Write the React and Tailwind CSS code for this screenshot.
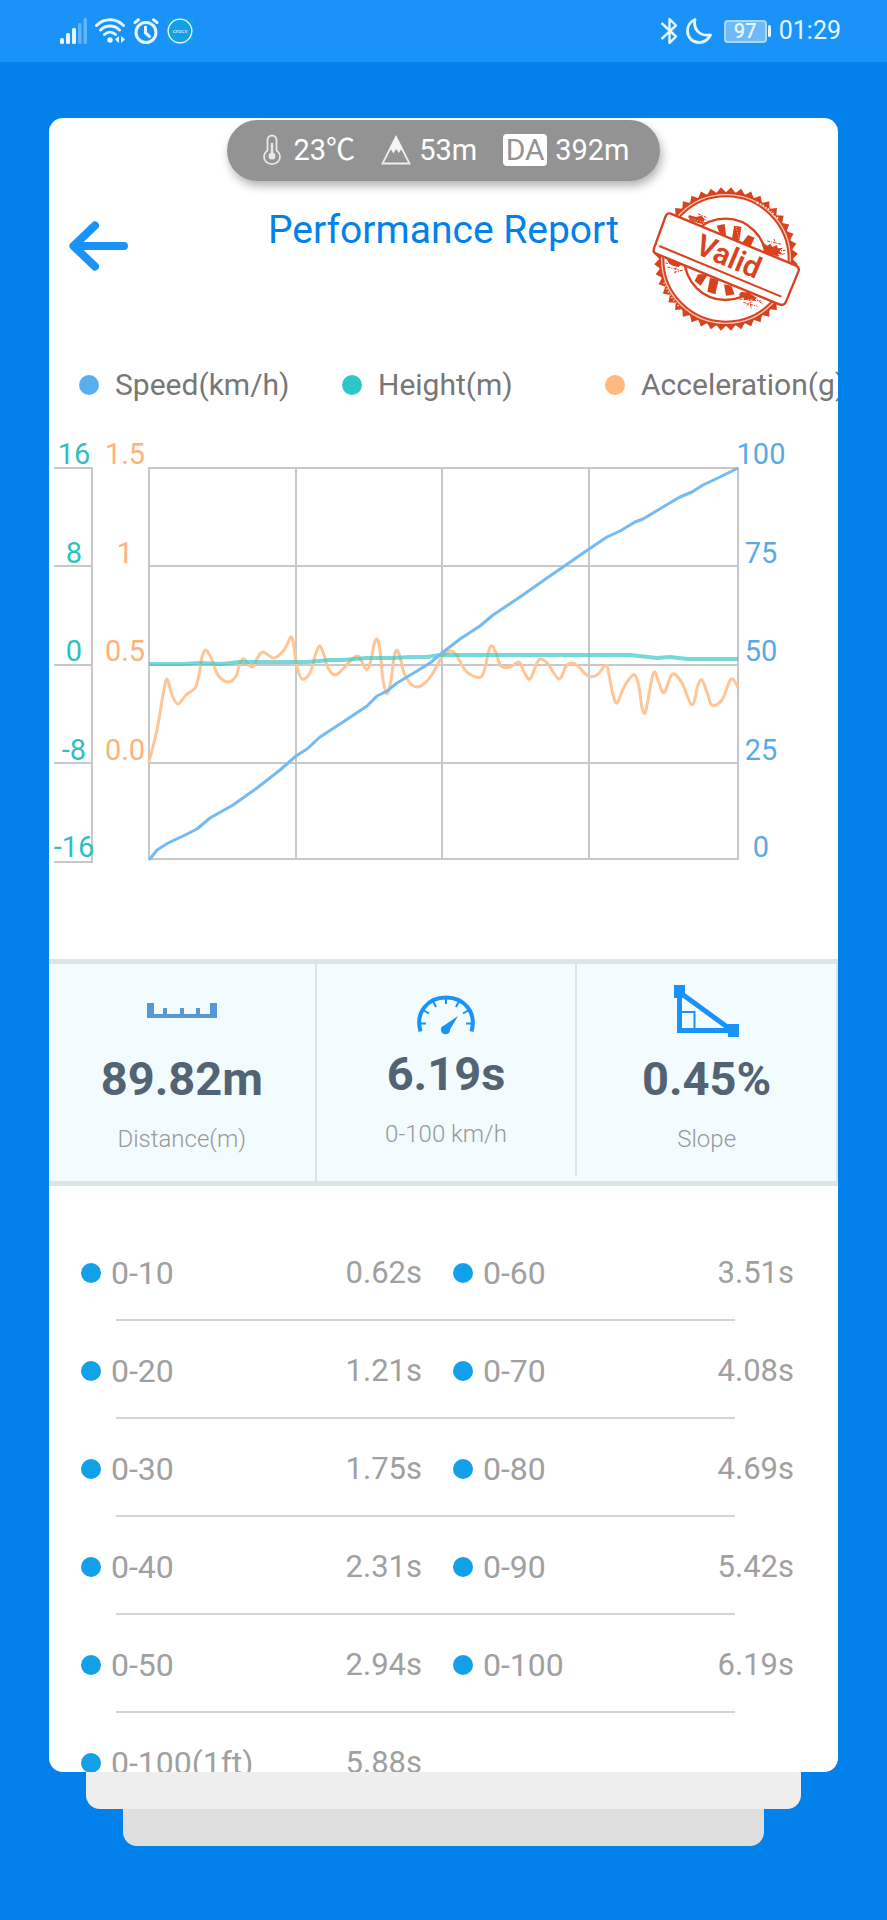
const legend = [
  { label: "Speed(km/h)", dot: "bg-[#5aaef0]" },
  { label: "Height(m)", dot: "bg-[#2ec7c9]" },
  { label: "Acceleration(g)", dot: "bg-[#ffb980]" },
];

const splits = [
  ["0-10", "0.62s", "0-60", "3.51s"],
  ["0-20", "1.21s", "0-70", "4.08s"],
  ["0-30", "1.75s", "0-80", "4.69s"],
  ["0-40", "2.31s", "0-90", "5.42s"],
  ["0-50", "2.94s", "0-100", "6.19s"],
  ["0-100(1ft)", "5.88s"],
];

// Chart points, in chart units
const acceleration = [
  [100, 322], [108, 290], [114, 255], [118, 239], [123, 255], [129, 264],
  [137, 255], [146, 248], [150, 235], [153, 217], [157, 210], [163, 220],
  [169, 235], [179, 242], [187, 236], [191, 223], [195, 219], [203, 227],
  [209, 217], [214, 212], [225, 218], [235, 210], [242, 197], [245, 207],
  [248, 227], [253, 239], [261, 233], [267, 213], [271, 206], [275, 215],
  [279, 228], [286, 235], [294, 229], [303, 219], [309, 216], [313, 222],
  [318, 230], [322, 220], [325, 205], [328, 199], [331, 210], [334, 240],
  [338, 254], [342, 240], [345, 217], [348, 210], [351, 217], [355, 233],
  [361, 243], [368, 247], [376, 243], [384, 233], [393, 217], [402, 211],
  [408, 216], [416, 230], [424, 236], [432, 237], [436, 228], [440, 210],
  [443, 206], [447, 213], [452, 226], [461, 227], [470, 222], [475, 232],
  [481, 239], [488, 223], [492, 219], [499, 224], [510, 239], [517, 226],
  [522, 223], [529, 226], [539, 236], [548, 235], [557, 225], [560, 235],
  [564, 255], [568, 263], [574, 249], [581, 238], [586, 235], [590, 247],
  [593, 268], [596, 273], [599, 260], [603, 238], [606, 232], [610, 243],
  [615, 253], [621, 238], [625, 234], [633, 243], [643, 265], [649, 245],
  [653, 240], [658, 252], [663, 265], [673, 260], [682, 239], [689, 247],
];

const speed = [
  [100, 420], [108, 410], [119, 403], [134, 396], [148, 389], [161, 378],
  [184, 365], [208, 348], [231, 330], [247, 316], [258, 309], [271, 297],
  [294, 282], [318, 266], [328, 256], [338, 251], [348, 243], [368, 231],
  [381, 223], [393, 213], [411, 199], [431, 186], [444, 175], [471, 157],
  [498, 138], [514, 127], [540, 109], [558, 97], [571, 91], [586, 82],
  [594, 79], [614, 67], [631, 57], [643, 52], [654, 45], [671, 37], [689, 28],
];

const height = [
  [100, 224], [134, 224], [151, 223], [171, 224], [191, 222], [258, 222],
  [281, 220], [294, 220], [318, 218], [344, 218], [361, 217], [378, 217],
  [391, 215], [581, 215], [608, 218], [621, 217], [638, 219], [689, 219],
];

// Catmull-Rom spline through the points
const smooth = (points) => {
  let d = `M${points[0][0]} ${points[0][1]}`;
  for (let i = 0; i < points.length - 1; i++) {
    const p0 = points[i - 1] || points[i];
    const p1 = points[i];
    const p2 = points[i + 1];
    const p3 = points[i + 2] || p2;
    d += `C${p1[0] + (p2[0] - p0[0]) / 6} ${p1[1] + (p2[1] - p0[1]) / 6} ${
      p2[0] - (p3[0] - p1[0]) / 6
    } ${p2[1] - (p3[1] - p1[1]) / 6} ${p2[0]} ${p2[1]}`;
  }
  return d;
};

const StatusBar = () => (
  <div className="flex h-[62px] shrink-0 items-center justify-between bg-[#1993f8] pl-[60px] pr-[46px] text-[#e6f5ff]">
    <div className="flex items-center gap-2">
      <svg width="27" height="26" viewBox="0 0 27 26" fill="currentColor">
        <rect x="0" y="20" width="4" height="6" rx="1.5" />
        <rect x="6" y="15" width="4" height="11" rx="1.5" />
        <rect x="12" y="10" width="4" height="16" rx="1.5" />
        <rect x="18" y="5" width="3.5" height="21" rx="1.5" opacity=".35" />
        <rect x="23.5" y="0" width="3.5" height="26" rx="1.5" opacity=".35" />
      </svg>
      <svg width="30" height="26" viewBox="0 0 30 26" fill="none" stroke="currentColor" strokeWidth="3" strokeLinecap="round">
        <path d="M1.5 7.5C9 -.3 21 -.3 28.5 7.5" />
        <path d="M5.5 12C11 6.8 19 6.8 24.5 12" />
        <path d="M9.5 16.5C12.8 13.5 17.2 13.5 20.5 16.5" />
        <circle cx="15" cy="22" r="2.7" fill="currentColor" stroke="none" />
        <path d="M24 18v7l-4-3.500zM26 18v7l4-3.500z" fill="currentColor" stroke="none" />
      </svg>
      <svg width="26" height="26" viewBox="0 0 26 26" fill="none" stroke="currentColor" strokeWidth="3" strokeLinecap="round">
        <circle cx="13" cy="14.500" r="10" />
        <path d="M2 4.500L5.500 1.800M24 4.500L20.500 1.800" />
        <path d="M12.500 9v6l4 3.500" />
      </svg>
      <svg width="26" height="26" viewBox="0 0 26 26" className="bg-[#14a0e8]">
        <circle cx="13" cy="13" r="11.800" fill="none" stroke="#fff" strokeWidth="1.300" />
        <text x="13" y="15" textAnchor="middle" fontSize="6" fill="#e6f5ff">
          crocv
        </text>
      </svg>
    </div>
    <div className="flex items-center gap-2">
      <svg width="18" height="28" viewBox="0 0 18 28" fill="none" stroke="currentColor" strokeWidth="2.400" strokeLinejoin="round">
        <path d="M1.500 6L16 19.500L9.500 26V2L16 8.500L1.500 22" />
      </svg>
      <svg width="26" height="26" viewBox="0 0 26 26" fill="none" stroke="currentColor" strokeWidth="2.800" strokeLinejoin="round">
        <path d="M9 1.500C7 11 13 18.500 24.500 17C22 22 17.500 24.500 13 24.500C6.500 24.500 1.500 19.500 1.500 13C1.500 8 4.500 3.500 9 1.500Z" />
      </svg>
      <div className="ml-1 flex items-center gap-px">
        <div className="flex h-[23px] w-[43px] items-center justify-center rounded border-2 border-[#a8d8ff] bg-[#6ebaf9] text-[20px] font-medium leading-5">
          97
        </div>
        <div className="h-3 w-[3px] rounded-sm bg-current" />
      </div>
      <span className="text-[25px] leading-8">01:29</span>
    </div>
  </div>
);

const ConditionsPill = () => (
  <div className="mx-auto mt-[2px] flex h-[61px] shrink-0 items-center gap-[26px] rounded-full bg-[#939393] px-[31px] pb-[2px] text-[29px] leading-8 text-white shadow-[2px_5px_10px_rgba(0,0,0,0.3)]">
    <div className="flex items-center gap-2">
      <svg width="28" height="32" viewBox="0 0 28 32" fill="none" stroke="#e8e8e8" strokeWidth="1.800">
        <path d="M9.500 6a4.500 4.500 0 0 1 9 0v10.500a8 7.500 0 1 1-9 0z" />
        <path d="M14 9v12" strokeWidth="2.500" />
        <circle cx="14" cy="22" r="3.500" fill="#e8e8e8" stroke="none" />
      </svg>
      <span>23℃</span>
    </div>
    <div className="flex items-center gap-2">
      <svg width="30" height="30" viewBox="0 0 30 30">
        <path d="M15 2L28.500 28.500H1.500Z" fill="none" stroke="#eee" strokeWidth="1.800" />
        <path d="M15 1L22.500 16L20 14.500L18 18L15 14L12.500 18.500L10 14.500L7.500 16Z" fill="#f4f4f4" />
      </svg>
      <span>53m</span>
    </div>
    <div className="flex items-center gap-2">
      <span className="w-11 rounded bg-white text-center text-[30px] text-[#939393]">
        DA
      </span>
      <span>392m</span>
    </div>
  </div>
);

const spokes = [
  "M232 150L256 145L260 178L246 186Z",
  "M284 150L306 153L300 196L278 190Z",
  "M326 178L346 186L334 212L306 204Z",
  "M176 296L206 296L184 330L166 316Z",
  "M212 306L238 312L228 356L204 348Z",
  "M254 326L276 330L286 356L260 360Z",
];

const ValidStamp = () => {
  const teeth = [];
  for (let i = 0; i < 44; i++) {
    const point = (r, k) => {
      const a = ((i + k) / 44) * Math.PI * 2;
      return `${(260 + r * Math.cos(a)).toFixed(1)},${(250 + r * Math.sin(a)).toFixed(1)}`;
    };
    teeth.push(point(200, 0), point(216, 0.5), point(200, 1));
  }
  return (
    <svg width="148" height="144" viewBox="38 34 444 432">
      <polygon points={teeth.join(" ")} fill="#d8431f" />
      <circle cx="260" cy="250" r="197" fill="#f6c9bd" />
      <circle cx="260" cy="250" r="198" fill="none" stroke="#d8431f" strokeWidth="6" />
      <circle cx="260" cy="250" r="188" fill="#fff" stroke="#d8431f" strokeWidth="6" />
      <path d="M352 80Q390 98 420 134" fill="none" stroke="#fff" strokeWidth="6" strokeDasharray="5 7 3 4" />
      <path d="M360 84L418 126" stroke="#d8431f" strokeWidth="3" strokeDasharray="2 6 5 4" />
      <path d="M74 320Q90 362 122 396" fill="none" stroke="#f6c9bd" strokeWidth="5" strokeDasharray="4 6" />
      <circle cx="258" cy="251" r="122" fill="none" stroke="#d8431f" strokeWidth="7" />
      <g fill="#d8431f">
        {spokes.map((d) => (
          <path key={d} d={d} />
        ))}
        <path d="M368 198L384 210L392 204L400 214L412 208L416 218L432 216L420 226L430 236L416 234L418 244L404 238L396 246L378 240Z" />
        <path d="M306 348L330 352L352 366L346 374L328 370L316 374L310 364L298 358Z" />
        <path d="M148 118L170 124L186 120L196 130L190 146L172 140L150 134Z" />
        <path d="M82 250L104 256L126 264L118 274L100 270L88 262Z" />
      </g>
      <path d="M288 146L300 192M150 128L196 140" stroke="#fff" strokeWidth="2" strokeDasharray="3 5" />
      <g stroke="#d8431f" strokeWidth="3" fill="none">
        <path d="M146 124L204 134M154 138L208 142M176 114L202 126" strokeDasharray="9 3 4 3" />
        <path d="M384 196L428 206M396 244L436 234M404 190L410 206M414 226L440 224" strokeDasharray="8 3 3 3" />
        <path d="M78 262L150 274M84 274L132 286M104 290L136 282M140 262L186 284M112 256L108 294" strokeDasharray="8 4 4 3" />
        <path d="M300 370L366 376M312 380L354 392M330 366L336 400M344 364L370 386M322 390L340 374" strokeDasharray="10 3 4 3" />
      </g>
      <path
        d="M94 114L470 270Q482 276 477 288L440 378Q434 392 420 386L50 234Q40 230 44 218L78 124Q83 110 94 114Z"
        fill="#fff"
        stroke="#d8431f"
        strokeWidth="7"
      />
      <path d="M60 211L426 363" stroke="#d8431f" strokeWidth="6" />
      <text
        transform="translate(256 271) rotate(23)"
        textAnchor="middle"
        fontSize="90"
        className="fill-[#d8431f] font-semibold"
      >
        Valid
      </text>
    </svg>
  );
};

const gridX = [100, 247, 393, 540, 689];
const gridY = [28, 126, 225, 323, 419];
const labelY = [24, 123, 221, 320, 417];

const Chart = () => (
  <svg viewBox="0 -16 789 456" className="w-full shrink-0" fontSize="29">
    <g stroke="#c8c8c8" strokeWidth="2" fill="none">
      {gridX.map((x) => (
        <path key={x} d={`M${x} 27V420`} />
      ))}
      {gridY.map((y) => (
        <path key={y} d={`M99 ${y}H690`} />
      ))}
      <path d="M5 28H43V422H5M5 126H43M5 225H43M5 323H43" />
    </g>
    <g fill="none" strokeLinejoin="round">
      <path d={smooth(acceleration)} stroke="#ffc596" strokeWidth="3" />
      <path d={`M${height.join("L")}`} stroke="#3cc8c8" strokeOpacity=".7" strokeWidth="4" />
      <path d={`M${speed.join("L")}`} stroke="#74bbf1" strokeWidth="3" />
    </g>
    <g textAnchor="middle" fill="#2fbfbf">
      {["16", "8", "0", "-8", "-16"].map((t, i) => (
        <text key={t} x="25" y={labelY[i]}>
          {t}
        </text>
      ))}
    </g>
    <g textAnchor="middle" fill="#fdb27a">
      {["1.5", "1", "0.5", "0.0"].map((t, i) => (
        <text key={t} x="76" y={labelY[i]}>
          {t}
        </text>
      ))}
    </g>
    <g textAnchor="middle" fill="#5aaae6">
      {["100", "75", "50", "25", "0"].map((t, i) => (
        <text key={t} x="712" y={labelY[i]}>
          {t}
        </text>
      ))}
    </g>
  </svg>
);

const RulerIcon = () => (
  <svg width="70" height="16" viewBox="0 0 70 16" fill="#5598d4">
    <path d="M0 0H7V11H16V5H20V11H33V5H37V11H49V5H53V11H63V0H70V15H0Z" />
  </svg>
);

const GaugeIcon = () => (
  <svg width="58" height="60" viewBox="0 0 58 60" fill="none" stroke="#1993f8">
    <path d="M3.500 55.500C-2 36 11 21.500 29 21.500C47 21.500 60 36 54.500 55.500" strokeWidth="4" />
    <path d="M2 47.500H9M56 47.500H49M6 34L12 37.500M52 34L46 37.500M16 25L19 31M42 25L39 31M29 21V28" strokeWidth="2" />
    <path d="M41 40L33 53.500A4.500 4.500 0 1 1 27 49.500Z" fill="#1993f8" stroke="none" />
  </svg>
);

const SlopeIcon = () => (
  <svg width="66" height="52" viewBox="0 0 66 52" fill="none" stroke="#1993f8">
    <path d="M5.500 8V45.500H58L8 9" strokeWidth="5" />
    <path d="M8 27H20.500V45" strokeWidth="2" />
    <path d="M0 0H11V13H0ZM54 39H65V52H54Z" fill="#1993f8" stroke="none" />
  </svg>
);

const Stat = ({ icon, value, label, className }) => (
  <div
    className={`flex flex-col items-center justify-end border-r-2 border-[#dae5e8] ${className}`}
  >
    <div className="flex h-[60px] items-center">{icon}</div>
    <p className="mt-2.5 text-[47px] font-bold leading-14 text-[#526373]">
      {value}
    </p>
    <p className="mt-4 text-[24px] font-light leading-8 text-[#999999]">
      {label}
    </p>
  </div>
);

export default function App() {
  return (
    <div className="flex h-screen flex-col bg-[#0281eb] font-[Roboto,'Noto_Sans_CJK_SC',sans-serif]">
      <StatusBar />

      <main className="mx-[49px] mt-14 flex min-h-0 flex-1 flex-col overflow-x-hidden overflow-y-auto rounded-[14px] bg-white [scrollbar-width:none]">
        <ConditionsPill />

        <header className="mt-1.5 grid shrink-0 grid-cols-[1fr_auto_1fr] items-start">
          <button type="button" aria-label="Back" className="ml-5 mt-[34px] w-[60px]">
            <svg width="60" height="50" viewBox="0 0 60 50" fill="none" stroke="#1993f8" strokeWidth="8" strokeLinecap="round" strokeLinejoin="round">
              <path d="M6 25H55M26 4.500L4.500 25L26 45.500" />
            </svg>
          </button>
          <h1 className="mt-[19px] text-[39px] leading-12 text-[#0281eb]">
            Performance Report
          </h1>
          <div className="mr-[38px] justify-self-end">
            <ValidStamp />
          </div>
        </header>

        {/* Legend */}
        <ul className="mt-9 grid shrink-0 grid-cols-3 text-[30px] leading-9 text-[#777777]">
          {legend.map((item) => (
            <li key={item.label} className="flex items-center gap-4 pl-[30px] whitespace-nowrap">
              <span className={`size-5 shrink-0 rounded-full ${item.dot}`} />
              {item.label}
            </li>
          ))}
        </ul>

        <div className="mt-[21px] shrink-0">
          <Chart />
        </div>

        {/* Stats */}
        <section className="mt-[79px] flex h-[227px] shrink-0 border-y-[5px] border-[#dae5e8] bg-[#f2fbfd]">
          <Stat
            className="flex-[267] pb-[26px]"
            icon={<RulerIcon />}
            value="89.82m"
            label="Distance(m)"
          />
          <Stat
            className="mb-[5px] flex-[260] pb-[26px]"
            icon={<GaugeIcon />}
            value="6.19s"
            label="0-100 km/h"
          />
          <Stat
            className="flex-[260] pb-[26px]"
            icon={<SlopeIcon />}
            value="0.45%"
            label="Slope"
          />
        </section>

        {/* Splits */}
        <table className="mt-[37px] block shrink-0 pl-8 pr-[13px] text-[#a0a0a0]">
          <tbody className="block">
            {splits.map((row) => (
              <tr
                key={row[0]}
                className="grid grid-cols-4 after:col-span-4 after:ml-[35px] after:mr-[90px] after:h-[2px] after:bg-[#d4d4d4]"
              >
                {row.map((cell, i) =>
                  i % 2 === 0 ? (
                    <th
                      key={cell}
                      scope="row"
                      className="flex h-24 items-center gap-2.5 pt-1 text-[32px] font-normal leading-10"
                    >
                      <span className="size-5 shrink-0 rounded-full bg-[#12a0e8]" />
                      {cell}
                    </th>
                  ) : (
                    <td
                      key={cell}
                      className="flex h-24 items-center justify-end pt-1 pr-[31px] text-[31px] leading-10"
                    >
                      {cell}
                    </td>
                  )
                )}
              </tr>
            ))}
          </tbody>
        </table>
      </main>

      {/* Stacked sheets under the card */}
      <div className="mx-[86px] h-[37px] shrink-0 rounded-b-[14px] bg-[#eeeeee]" />
      <div className="mx-[123px] mb-[74px] h-[37px] shrink-0 rounded-b-[14px] bg-[#dedede]" />
    </div>
  );
}
